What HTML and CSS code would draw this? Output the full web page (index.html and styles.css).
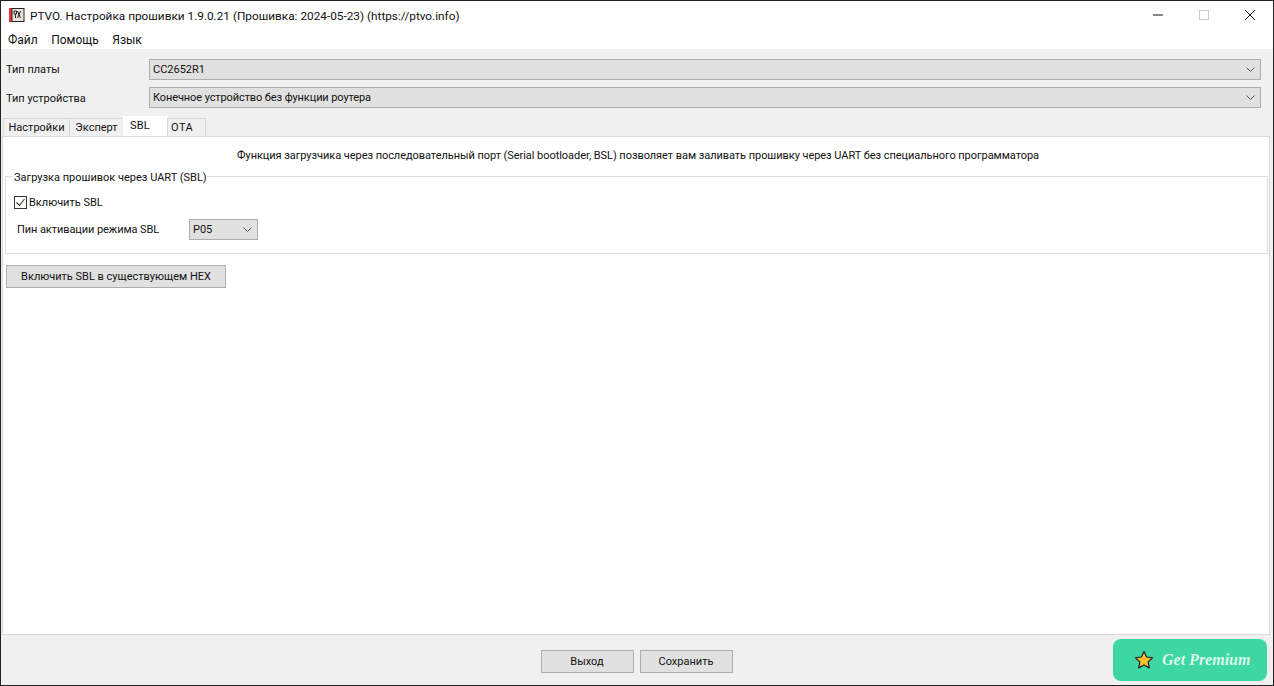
FILE: index.html
```html
<!DOCTYPE html>
<html lang="ru">
<head>
<meta charset="utf-8">
<title>PTVO</title>
<link rel="stylesheet" href="styles.css">
</head>
<body>
<div class="window">
  <header class="titlebar">
    <svg class="app-icon" width="16" height="14" viewBox="0 0 16 14">
      <rect x="0" y="0" width="3" height="14" fill="#e8303a"/>
      <rect x="3" y="0.5" width="12" height="13" fill="#e9e4d8" stroke="#222" stroke-width="1"/>
      <path d="M5 3h2.5v3H5zM6.5 6v4M8.5 3l3 7M11.5 3l-3 7" fill="none" stroke="#222" stroke-width="1"/>
    </svg>
    <span class="title">PTVO. Настройка прошивки 1.9.0.21 (Прошивка: 2024-05-23) (https://ptvo.info)</span>
    <div class="controls">
      <span class="ctl"><svg width="16" height="16" viewBox="0 0 16 16"><path d="M3 8h10" stroke="#111" fill="none"/></svg></span>
      <span class="ctl"><svg width="16" height="16" viewBox="0 0 16 16"><rect x="3.5" y="3.5" width="9" height="9" stroke="#ccc" fill="none"/></svg></span>
      <span class="ctl"><svg width="16" height="16" viewBox="0 0 16 16"><path d="M3 3l10 10M13 3L3 13" stroke="#111" fill="none"/></svg></span>
    </div>
  </header>
  <nav class="menu"><span>Файл</span><span>Помощь</span><span>Язык</span></nav>
  <main class="body">
    <div class="form-row">
      <label class="row-label">Тип платы</label>
      <div class="select wide"><span>CC2652R1</span><svg class="chev" width="9" height="5" viewBox="0 0 9 5"><path d="M0.5 0.5L4.5 4.5l4-4" fill="none" stroke="#555"/></svg></div>
    </div>
    <div class="form-row second">
      <label class="row-label">Тип устройства</label>
      <div class="select wide"><span class="tight">Конечное устройство без функции роутера</span><svg class="chev" width="9" height="5" viewBox="0 0 9 5"><path d="M0.5 0.5L4.5 4.5l4-4" fill="none" stroke="#555"/></svg></div>
    </div>
    <div class="tabs">
      <span class="tab t1">Настройки</span>
      <span class="tab t2">Эксперт</span>
      <span class="tab active">SBL</span>
      <span class="tab t4">OTA</span>
    </div>
    <section class="panel">
      <p class="note">Функция загрузчика через последовательный порт (Serial bootloader, BSL) позволяет вам заливать прошивку через UART без специального программатора</p>
      <fieldset class="group">
        <legend>Загрузка прошивок через UART (SBL)</legend>
        <div class="check-row">
          <svg class="check" width="13" height="13" viewBox="0 0 13 13"><rect x="0.5" y="0.5" width="12" height="12" fill="#fff" stroke="#333"/><path d="M2.5 6.5l3 3 5-6.5" fill="none" stroke="#333" stroke-width="1.1"/></svg>
          <span>Включить SBL</span>
        </div>
        <div class="pin-row">
          <span class="pin-label">Пин активации режима SBL</span>
          <div class="select small"><span>P05</span><svg class="chev" width="9" height="5" viewBox="0 0 9 5"><path d="M0.5 0.5L4.5 4.5l4-4" fill="none" stroke="#555"/></svg></div>
        </div>
      </fieldset>
      <button class="btn hex">Включить SBL в существующем HEX</button>
    </section>
    <footer class="footer">
      <button class="btn foot">Выход</button>
      <button class="btn foot">Сохранить</button>
    </footer>
    <div class="premium">
      <svg width="20" height="20" viewBox="0 0 20 20"><path d="M10 1.5l2.6 5.5 6 .8-4.4 4.1 1.1 6L10 15l-5.3 2.9 1.1-6L1.4 7.8l6-.8z" fill="#fbc02d" stroke="#222" stroke-width="1.2" stroke-linejoin="round"/></svg>
      <span>Get Premium</span>
    </div>
  </main>
</div>
</body>
</html>
```
FILE: styles.css
```css
* { box-sizing: border-box; }
html, body { margin: 0; height: 100%; }
body {
  font-family: Roboto, "Noto Sans", sans-serif;
  font-size: 11px;
  color: #111;
  background: #fff;
  overflow: hidden;
}
.window {
  width: 1274px;
  height: 686px;
  border: 1px solid #222;
  display: flex;
  flex-direction: column;
  background: #fff;
}
.titlebar {
  height: 29px;
  flex: none;
  display: flex;
  align-items: center;
  padding-left: 8px;
  gap: 5px;
}
.title { font-size: 11.8px; white-space: nowrap; }
.app-icon { flex: none; margin-top: -2px; }
.controls { margin-left: auto; display: flex; }
.ctl { width: 46px; height: 29px; display: flex; align-items: center; justify-content: center; margin-top: -1px; }
.menu {
  height: 19px;
  flex: none;
  display: flex;
  gap: 13.5px;
  padding-left: 7px;
  align-items: center;
  font-size: 12px;
}
.body {
  flex: 1;
  position: relative;
  background: #f0f0f0;
  display: flex;
  flex-direction: column;
  padding-top: 10px;
  min-height: 0;
}
.form-row { display: flex; align-items: center; height: 21px; }
.form-row.second { margin-top: 7px; }
.second .row-label { padding-top: 1px; }
.row-label { width: 148px; padding-left: 5px; flex: none; }
.tight { letter-spacing: -0.1px; }
.select {
  height: 21px;
  background: #e1e1e1;
  border: 1px solid #adadad;
  display: flex;
  align-items: center;
  justify-content: space-between;
  padding: 0 5px 0 3px;
}
.wide { width: 1112px; }
.small { width: 69px; }
.tabs {
  display: flex;
  align-items: flex-end;
  height: 20px;
  margin-top: 8px;
  padding-left: 2px;
  position: relative;
  z-index: 1;
}
.tab {
  height: 18px;
  background: #f0f0f0;
  border: 1px solid #d9d9d9;
  border-bottom: none;
  margin-right: -1px;
  padding: 0 5px;
  display: flex;
  align-items: center;
  justify-content: center;
}
.t1 { width: 67px; }
.t2 { width: 55px; }
.t4 { width: 39px; justify-content: flex-start; padding-left: 3px; letter-spacing: 0.5px; }
.tab.active {
  width: 45px;
  height: 20px;
  background: #fff;
  border-color: #fff;
  padding: 0 0 3px 6px;
  justify-content: flex-start;
  letter-spacing: 0.2px;
}
.panel {
  flex: 1;
  margin: 0 3px 0 1px;
  background: #fff;
  border: 1px solid #d9d9d9;
  padding: 0 1px 0 2px;
  min-height: 0;
}
.note {
  margin: 10px 0 0;
  padding-left: 3px;
  text-align: center;
  height: 17px;
  line-height: 17px;
  letter-spacing: -0.05px;
}
.group {
  margin: 4px 0 0;
  padding: 0;
  height: 86px;
  border: 1px solid #dcdcdc;
  min-width: 0;
}
.group legend { padding: 3px 0 0 1px; margin-left: 7px; line-height: 14px; }
.check-row { display: flex; align-items: center; gap: 2px; margin: 9px 0 0 8px; height: 16px; }
.pin-row { display: flex; align-items: center; margin: 9px 0 0 11px; }
.pin-label { width: 172px; letter-spacing: -0.08px; }
.btn {
  font: inherit;
  color: #111;
  background: #e1e1e1;
  border: 1px solid #adadad;
  padding: 0;
}
.hex { display: block; width: 220px; height: 23px; margin: 11px 0 0 1px; }
.footer {
  height: 50px;
  flex: none;
  display: flex;
  justify-content: center;
  gap: 6px;
  padding-top: 15px;
  padding-right: 1px;
}
.foot { width: 93px; height: 23px; }
.premium {
  position: absolute;
  right: 6px;
  bottom: 4px;
  width: 154px;
  height: 42px;
  border-radius: 8px;
  background: #3ed6a3;
  display: flex;
  align-items: center;
  padding-left: 21px;
  gap: 8px;
  color: #d8f8ec;
  font-family: "Liberation Serif", serif;
  font-style: italic;
  font-weight: 700;
  font-size: 16px;
}
```
